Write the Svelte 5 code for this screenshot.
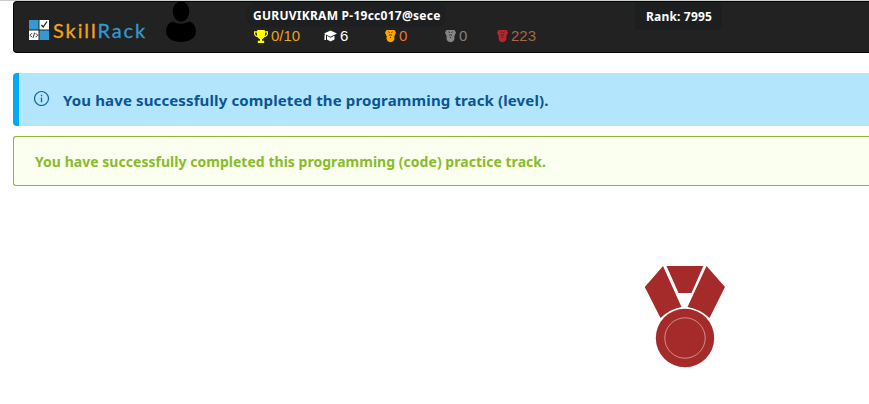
<script>
  const stats = [
    { kind: 'trophy', value: '0/10', icon: '#ffff00', color: '#e8a317', width: 70 },
    { kind: 'cap', value: '6', icon: '#ffffff', color: '#ffffff', width: 61 },
    { kind: 'medal', value: '0', icon: '#ffa500', color: '#e8762c', width: 60 },
    { kind: 'medal', value: '0', icon: '#858585', color: '#808080', width: 52 },
    { kind: 'medal', value: '223', icon: '#b3272d', color: '#a0694a', width: 60 }
  ];
</script>

<div class="page">
  <header>
    <div class="brand">
      <svg class="mark" width="20" height="20" viewBox="0 0 20 20">
        <path fill="#3399d0" d="M0 0h9.5v9.5H0zM10.5 10.5H20V20h-9.5z" />
        <path fill="#fff" d="M10.5 0H20v9.5h-9.5zM0 10.5h9.5V20H0z" />
        <path fill="none" stroke="#222" stroke-width="1.3" d="M12.4 5l1.8 2 3.8-5.5" />
        <path fill="none" stroke="#222" stroke-width=".9" d="M3 13.2L1 15.2l2 2M6.7 13.2l2 2-2 2M5.6 12.6l-1.5 5.2" />
      </svg>
      <span class="word"><span class="skill">Skill</span><span class="rack">Rack</span></span>
    </div>
    <svg class="avatar" width="32" height="42" viewBox="0 0 32 42">
      <ellipse cx="16" cy="10.5" rx="8.3" ry="10.3" />
      <path d="M7.500 20.500Q16 25 24.500 20.500C29 22 31 26 31 30.500C31 37 24 41 16 41S1 37 1 30.500C1 26 3 22 7.500 20.500z" />
    </svg>
    <div class="user">
      <div class="name"><span>GURUVIKRAM P-19cc017@sece</span></div>
      <div class="stats">
        {#each stats as s}
          <div class="stat" style="width:{s.width}px;color:{s.color}">
            {#if s.kind === 'trophy'}
              <svg width="14" height="13" viewBox="0 0 14 13" fill={s.icon}>
                <path d="M3.2 0h7.6v1.3H14v2.2c0 2-1.7 3.4-3.7 3.8C9.6 8.4 8.7 9 8 9.2v1.6h2.2V13H3.8v-2.2H6V9.2C5.3 9 4.4 8.4 3.7 7.3 1.7 6.9 0 5.5 0 3.5V1.3h3.2zM1.2 2.5v1c0 1.1.8 1.9 2 2.4-.3-1-.4-2.100-.4-3.400zM12.800 2.500h-1.600c0 1.300-.1 2.400-.4 3.400 1.200-.5 2-1.300 2-2.400z" />
              </svg>
            {:else if s.kind === 'cap'}
              <svg width="13" height="12" viewBox="0 0 13 12" fill={s.icon}>
                <path d="M6.5 0.500L13 3.500 6.500 6.800 0 3.500zM3 5.800l3.500 1.900L10.500 5.700v3.800L6.500 11.500 3 9.500zM.6 4.500h1.400v5.500H.4z" />
              </svg>
            {:else}
              <svg width="11" height="13" viewBox="0 0 11 13" fill={s.icon}>
                <path d="M1.500 0h8L11 2.500 9.200 6.800a4 4 0 1 1-7.400 0L0 2.500z" />
                <path d="M3.600 1.600l1 1.400M7.400 1.600l-1 1.400M4 5.200q1.500-.7 3 0" fill="none" stroke="#222" stroke-width=".8" />
                <circle cx="5.500" cy="7.500" r=".6" fill="#222" />
              </svg>
            {/if}
            <span>{s.value}</span>
          </div>
        {/each}
      </div>
    </div>
    <div class="rank"><span>Rank: 7995</span></div>
  </header>

  <div class="info">
    <svg width="16" height="16" viewBox="0 0 16 16">
      <circle cx="7.500" cy="8.500" r="7" fill="none" stroke="#155e9f" stroke-width="1.200" />
      <path d="M7.500 4.800v1.500M7.500 7.500v4.700" stroke="#155e9f" stroke-width="1.300" />
    </svg>
    <span>You have successfully completed the programming track (level).</span>
  </div>

  <div class="success"><span>You have successfully completed this programming (code) practice track.</span></div>

  <div class="award">
    <svg width="82" height="104" viewBox="0 0 82 104" fill="#a52a2a">
      <path d="M22.5 1H59.3L47.5 28H34.5z" />
      <path d="M19 1L37.5 42Q26 44 16.5 53L.8 22z" />
      <path d="M62.5 1L81 22 65.5 53Q56 44 43.5 42z" />
      <circle cx="41" cy="73" r="29.2" />
      <circle cx="41" cy="73" r="20.2" fill="none" stroke="#e3b9b9" stroke-width=".7" />
    </svg>
  </div>
</div>

<style>
  :global(body) { background: #fff; overflow: hidden; }
  .page {
    box-sizing: border-box;
    width: 869px;
    height: 404px;
    padding-left: 13px;
    border-top: 1px solid #cacfca;
    font-family: 'Noto Sans', 'Open Sans', sans-serif;
    font-weight: 700;
    white-space: nowrap;
    overflow: hidden;
  }
  header {
    box-sizing: border-box;
    display: flex;
    align-items: flex-start;
    height: 52px;
    background: #222;
    border: 1px solid #050505;
    border-right: 0;
    border-radius: 4px 0 0 4px;
  }
  .brand { display: flex; width: 151px; padding: 18px 0 0 15px; box-sizing: border-box; }
  .word {
    margin-left: 4px;
    font: 400 20px/20px Lato, sans-serif;
    letter-spacing: 1.9px;
    -webkit-text-stroke: 0.3px currentColor;
  }
  .skill { color: #f5a21b; }
  .rack { color: #3399d0; }
  .avatar { display: block; margin-top: -1px; }
  .user { width: 340px; margin-left: 49px; }
  .name {
    box-sizing: border-box;
    width: 200px;
    height: 25px;
    padding-left: 7px;
    border-radius: 10px;
    background: #1d1f20;
    color: #fff;
    font-size: 12px;
    line-height: 27px;
  }
  .name span { letter-spacing: 0.26px; }
  .stats { display: flex; height: 18px; padding-left: 8px; }
  .stat {
    display: flex;
    align-items: center;
    flex: none;
    gap: 3px;
    font: 400 15px/18px 'Liberation Sans', Arial, sans-serif;
  }
  .rank {
    box-sizing: border-box;
    width: 87px;
    height: 28px;
    margin-left: 49px;
    padding-left: 11px;
    border-radius: 4px;
    background: #1c1e1f;
    color: #fff;
    font-size: 12px;
    line-height: 29px;
    letter-spacing: 0.18px;
  }
  .info {
    box-sizing: border-box;
    display: flex;
    height: 53px;
    margin-top: 20px;
    padding: 17px 0 0 15px;
    border-left: 6px solid #03a9f4;
    border-radius: 4px 0 0 4px;
    background: #b3e5fc;
    color: #0a5596;
    font-size: 15px;
    line-height: 21px;
    letter-spacing: 0.13px;
  }
  .info span { margin-left: 13px; }
  .success {
    box-sizing: border-box;
    height: 50px;
    margin-top: 10px;
    padding-left: 21px;
    border: 1px solid #8bb832;
    border-right: 0;
    border-radius: 3px 0 0 3px;
    background: #fbffef;
    color: #8abb2a;
    font-size: 14px;
    line-height: 50px;
    letter-spacing: 0.03px;
  }
  .award { display: flex; padding: 79px 0 0 631px; }
</style>
